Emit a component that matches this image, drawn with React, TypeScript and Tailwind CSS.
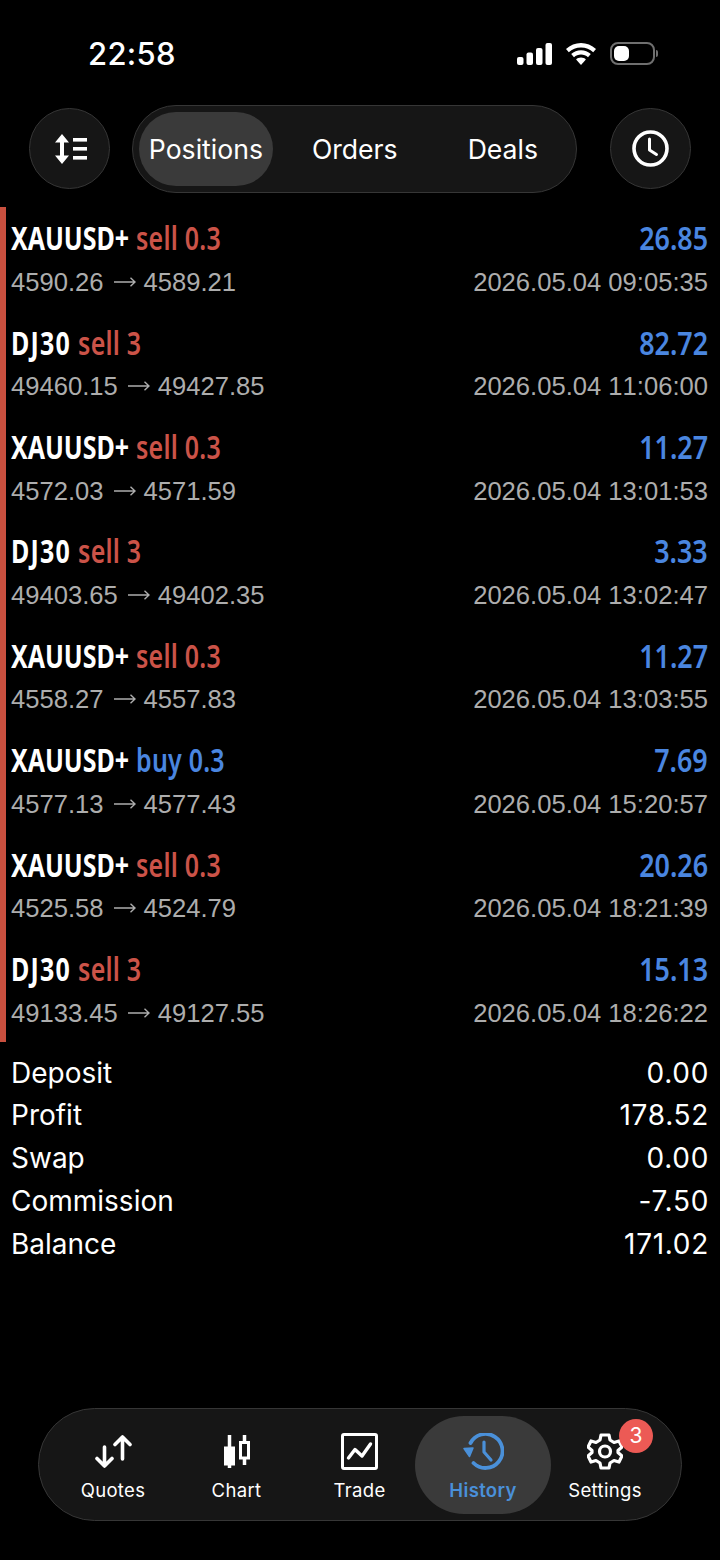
const rows = [
  { sym: "XAUUSD+", side: "sell", vol: "0.3", profit: "26.85", from: "4590.26", to: "4589.21", time: "2026.05.04 09:05:35" },
  { sym: "DJ30", side: "sell", vol: "3", profit: "82.72", from: "49460.15", to: "49427.85", time: "2026.05.04 11:06:00" },
  { sym: "XAUUSD+", side: "sell", vol: "0.3", profit: "11.27", from: "4572.03", to: "4571.59", time: "2026.05.04 13:01:53" },
  { sym: "DJ30", side: "sell", vol: "3", profit: "3.33", from: "49403.65", to: "49402.35", time: "2026.05.04 13:02:47" },
  { sym: "XAUUSD+", side: "sell", vol: "0.3", profit: "11.27", from: "4558.27", to: "4557.83", time: "2026.05.04 13:03:55" },
  { sym: "XAUUSD+", side: "buy", vol: "0.3", profit: "7.69", from: "4577.13", to: "4577.43", time: "2026.05.04 15:20:57" },
  { sym: "XAUUSD+", side: "sell", vol: "0.3", profit: "20.26", from: "4525.58", to: "4524.79", time: "2026.05.04 18:21:39" },
  { sym: "DJ30", side: "sell", vol: "3", profit: "15.13", from: "49133.45", to: "49127.55", time: "2026.05.04 18:26:22" },
];

const summary = [
  ["Deposit", "0.00"],
  ["Profit", "178.52"],
  ["Swap", "0.00"],
  ["Commission", "-7.50"],
  ["Balance", "171.02"],
];

function StatusBar() {
  return (
    <div className="flex h-[105px] items-start justify-between pt-[32px] pl-[88px] pr-[62px] [font-family:Inter,sans-serif]">
      <span className="text-[31px] leading-[44px] font-medium tracking-[0.3px] text-white">22:58</span>
      <div className="flex items-center gap-[14px] pt-[10px]">
        <svg width="35" height="22" viewBox="0 0 35 22" fill="white">
          <rect x="0" y="14" width="6.5" height="8" rx="2" />
          <rect x="9.5" y="9.5" width="6.5" height="12.5" rx="2" />
          <rect x="19" y="5" width="6.5" height="17" rx="2" />
          <rect x="28.5" y="0" width="6.5" height="22" rx="2" />
        </svg>
        <svg width="30" height="22" viewBox="0 0 30 22" fill="white">
          <path d="M15 0 C20.5 0 25.8 2.2 30 6 L27.2 9.2 C24 6.2 19.7 4.4 15 4.4 C10.3 4.4 6 6.2 2.8 9.2 L0 6 C4.2 2.2 9.5 0 15 0 Z" />
          <path d="M15 7.3 C18.7 7.3 22.2 8.7 24.8 11.1 L22 14.2 C20.1 12.5 17.7 11.6 15 11.6 C12.3 11.6 9.9 12.5 8 14.2 L5.2 11.1 C7.8 8.7 11.3 7.3 15 7.3 Z" />
          <path d="M15 14.5 C17 14.5 18.7 15.2 19.9 16.4 L15 22 L10.1 16.4 C11.3 15.2 13 14.5 15 14.5 Z" />
        </svg>
        <div className="flex items-center gap-[1px]">
          <div className="h-[23px] w-[45px] rounded-[8px] border-[2px] border-[#6f6f6f] p-[2px]">
            <div className="h-full w-[15px] rounded-[5px] bg-white" />
          </div>
          <div className="h-[7px] w-[2px] rounded-r-full bg-[#6f6f6f]" />
        </div>
      </div>
    </div>
  );
}

function Toolbar() {
  return (
    <div className="flex h-[102px] items-start pl-[29px] pr-[29px]">
      <div className="mt-[3px] flex h-[81px] w-[81px] items-center justify-center rounded-full border border-[#363636] bg-[#161616]">
        <svg className="ml-[3px]" width="32" height="30" viewBox="0 0 32 30" fill="white">
          <path d="M7 0 L14 8.5 L9 8.5 L9 21.5 L14 21.5 L7 30 L0 21.5 L5 21.5 L5 8.5 L0 8.5 Z" />
          <rect x="18" y="4" width="14" height="3.6" />
          <rect x="18" y="13" width="14" height="3.6" />
          <rect x="18" y="22" width="14" height="3.6" />
        </svg>
      </div>
      <div className="ml-[22px] flex h-[88px] w-[446px] items-center rounded-full border border-[#363636] bg-[#161616] pl-[6px] text-[26.6px] text-white [font-family:Inter,sans-serif]">
        <div className="flex h-[74px] w-[134px] items-center justify-center rounded-full bg-[#3a3a3a] pt-[2px]">Positions</div>
        <div className="ml-[39px] pt-[2px]">Orders</div>
        <div className="ml-[70px] pt-[2px]">Deals</div>
      </div>
      <div className="ml-[33px] mt-[3px] flex h-[81px] w-[81px] items-center justify-center rounded-full border border-[#363636] bg-[#161616]">
        <svg width="37" height="37" viewBox="0 0 37 37" fill="none" stroke="white" strokeWidth="3.6" strokeLinecap="round" strokeLinejoin="round">
          <circle cx="18.5" cy="18.5" r="16.5" />
          <path d="M17.5 9 L17.5 20 L24.5 24.5" strokeWidth="3" />
        </svg>
      </div>
    </div>
  );
}

function TradeRow({ row }: { row: (typeof rows)[0] }) {
  const sideColor = row.side === "sell" ? "text-[#cb5348]" : "text-[#4a86e0]";
  const symSpacing = row.sym === "DJ30" ? "tracking-[1.6px]" : "tracking-normal";
  return (
    <div className="h-[104.4px] pl-[11px] pr-[12px] pt-[10.3px]">
      <div className="flex h-[42px] items-center justify-between text-[32px] leading-[42px] font-semibold [font-family:'Noto_Sans',sans-serif]">
        <div className="origin-left scale-x-[0.78] whitespace-nowrap">
          <span className={`font-bold text-white ${symSpacing}`}>{row.sym}</span>
          <span className={`ml-[9px] tracking-[0.3px] ${sideColor}`}>
            {row.side} {row.vol}
          </span>
        </div>
        <div className="origin-right scale-x-[0.84] font-semibold text-[#4a86e0]">{row.profit}</div>
      </div>
      <div className="mt-[1.5px] flex h-[42px] items-center justify-between text-[25.6px] leading-[42px] text-[#adadad] [font-kerning:none] [font-family:'Liberation_Sans',sans-serif]">
        <div className="flex items-center">
          <span>{row.from}</span>
          <svg className="ml-[10px] mr-[8px]" width="22" height="10" viewBox="0 0 22 10" fill="none" stroke="#adadad" strokeWidth="1.4">
            <path d="M0 5 L21 5 M16.5 0.8 L21 5 L16.5 9.2" />
          </svg>
          <span>{row.to}</span>
        </div>
        <div>{row.time}</div>
      </div>
    </div>
  );
}

function QuotesIcon() {
  return (
    <svg width="37" height="33" viewBox="0 0 37 33" fill="none" stroke="white" strokeWidth="3.6" strokeLinecap="round" strokeLinejoin="round">
      <path d="M9.5 12 L9.5 31 M2 23.5 L9.5 31 L17 23.5" />
      <path d="M27.5 2 L27.5 24 M20 9.5 L27.5 2 L35 9.5" />
    </svg>
  );
}

function ChartIcon() {
  return (
    <svg width="26" height="33" viewBox="0 0 26 33" fill="white" stroke="white">
      <rect x="0.5" y="12" width="10" height="18" strokeWidth="1" />
      <path d="M5.5 0 L5.5 33" strokeWidth="3.5" />
      <rect x="16.5" y="7.5" width="8" height="15.5" fill="none" strokeWidth="3" />
      <path d="M20.5 0 L20.5 7.5 M20.5 23 L20.5 30" strokeWidth="3.5" />
    </svg>
  );
}

function TradeIcon() {
  return (
    <svg width="37" height="37" viewBox="0 0 37 37" fill="none" stroke="white" strokeLinejoin="round" strokeLinecap="round">
      <rect x="1.5" y="1.5" width="34" height="34" rx="1.5" strokeWidth="3" />
      <path d="M7.5 25 L14 16.5 L21 23 L29.5 11" strokeWidth="3.4" />
    </svg>
  );
}

function HistoryIcon() {
  return (
    <svg width="41" height="37" viewBox="0 0 41 37" fill="none" stroke="#4a90d9" strokeWidth="3.8" strokeLinecap="round" strokeLinejoin="round">
      <path d="M7.5 10 A17 17 0 1 1 10.5 30" />
      <path d="M1 15.5 L10 15 L6.5 23.5 Z" fill="#4a90d9" strokeWidth="1.5" />
      <path d="M21 9 L21 19 L28 27" strokeWidth="3.2" />
    </svg>
  );
}

function SettingsIcon() {
  return (
    <svg width="36" height="37" viewBox="0 0 36 37" fill="none" stroke="white" strokeWidth="3.2" strokeLinejoin="round">
      <path d="M14 2 L22 2 L23 7 L27 9.5 L32 8 L35 14 L31 17.5 L31 19.5 L35 23 L32 29 L27 27.5 L23 30 L22 35 L14 35 L13 30 L9 27.5 L4 29 L1 23 L5 19.5 L5 17.5 L1 14 L4 8 L9 9.5 L13 7 Z" />
      <circle cx="18" cy="18.5" r="5.5" />
    </svg>
  );
}

function TabBar() {
  return (
    <div className="mx-[38px] flex h-[113px] items-center rounded-full border border-[#363636] bg-[#161616] pl-[12px] text-[18.5px] tracking-[0.35px] text-white [font-family:Inter,sans-serif]">
      <div className="flex h-[98px] w-[124px] flex-col items-center justify-start pt-[19px]">
        <QuotesIcon />
        <span className="mt-[10px] leading-[24px]">Quotes</span>
      </div>
      <div className="flex h-[98px] w-[123px] flex-col items-center justify-start pt-[19px]">
        <ChartIcon />
        <span className="mt-[10px] leading-[24px]">Chart</span>
      </div>
      <div className="flex h-[98px] w-[123px] flex-col items-center justify-start pt-[17px]">
        <TradeIcon />
        <span className="mt-[8px] leading-[24px]">Trade</span>
      </div>
      <div className="-ml-[6px] flex h-[98px] w-[136px] flex-col items-center justify-start rounded-full bg-[#3a3a3a] pt-[17px] font-semibold text-[#4a90d9]">
        <HistoryIcon />
        <span className="mt-[8px] leading-[24px]">History</span>
      </div>
      <div className="relative flex h-[98px] w-[108px] flex-col items-center justify-start pt-[17px]">
        <SettingsIcon />
        <span className="mt-[8px] leading-[24px]">Settings</span>
        <div className="absolute top-[3px] left-[68px] flex h-[34px] w-[34px] items-center justify-center rounded-full bg-[#ec5a55] text-[21px] tracking-normal text-white">3</div>
      </div>
    </div>
  );
}

export default function App() {
  return (
    <div className="flex h-[1560px] w-[720px] flex-col overflow-hidden bg-black">
      <StatusBar />
      <Toolbar />
      <div className="relative">
        <div className="absolute top-0 bottom-0 left-0 w-[6px] bg-[#c9503f]" />
        {rows.map((row, i) => (
          <TradeRow key={i} row={row} />
        ))}
      </div>
      <div className="mt-[9.5px] pl-[11px] pr-[11px] text-[28px] leading-[42.8px] text-white [font-family:Inter,sans-serif]">
        {summary.map(([label, value]) => (
          <div key={label} className="flex justify-between">
            <span>{label}</span>
            <span className="tracking-[0.7px]">{value}</span>
          </div>
        ))}
      </div>
      <div className="mt-auto pb-[39px]">
        <TabBar />
      </div>
    </div>
  );
}
